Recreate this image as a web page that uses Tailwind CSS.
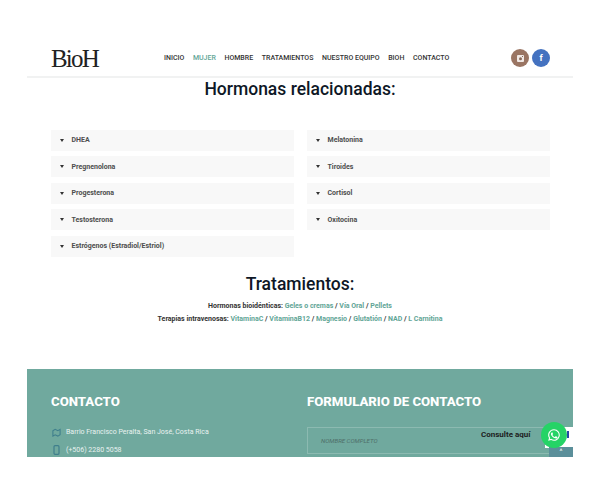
<!DOCTYPE html>
<html lang="es">
<head>
  <meta charset="UTF-8" />
  <title>BioH - Mujer</title>
  <script src="https://cdn.jsdelivr.net/npm/@tailwindcss/browser@4"></script>
</head>
<body class="bg-white w-[600px] h-[500px] overflow-hidden font-['Roboto',sans-serif]">
  <div class="relative mx-[27px] mt-[40px] w-[546px] h-[417px] overflow-hidden flex flex-col">

    <!-- Header -->
    <header class="h-[38px] shrink-0 border-b-2 border-[#f1f2f2] flex items-center pl-[24px] pr-[23px]">
      <span class="font-['Liberation_Serif',serif] text-[25px] tracking-[-1.800px] leading-none text-[#222] w-[113px]">BioH</span>
      <nav class="flex items-center gap-[8.600px] text-[7px] font-medium text-[#333] uppercase">
        <a>Inicio</a>
        <a class="text-[#5fa596]">Mujer</a>
        <a>Hombre</a>
        <a>Tratamientos</a>
        <a>Nuestro equipo</a>
        <a>BioH</a>
        <a>Contacto</a>
      </nav>
      <div class="ml-auto flex items-center gap-[3px]">
        <span class="w-[18px] h-[18px] rounded-full bg-[#9a7563] flex items-center justify-center">
          <svg width="7" height="7" viewBox="0 0 7 7"><rect width="7" height="7" rx="1" fill="#f1e9e5"/><circle cx="3.500" cy="3.700" r="1.500" fill="#8a6b5b"/><rect x="5" y="1" width="1" height="1" fill="#8a6b5b"/></svg>
        </span>
        <span class="w-[18px] h-[18px] rounded-full bg-[#4472c0] flex items-center justify-center text-white text-[9px] font-bold leading-none">f</span>
      </div>
    </header>

    <h2 class="text-center text-[17.500px] leading-[22px] font-medium text-[#0e1726]">Hormonas relacionadas:</h2>

    <!-- Acordeones -->
    <div class="grid grid-cols-2 gap-x-[13px] gap-y-[5.600px] pl-[24px] pr-[23px] mt-[29.700px] text-[7px] font-bold text-[#4d4d4d]">
      <div class="h-[21px] bg-[#f8f8f8] flex items-center pl-[9px] gap-[7.500px]"><span class="w-0 h-0 border-x-[2.500px] border-x-transparent border-t-[3px] border-t-[#333]"></span>DHEA</div>
      <div class="h-[21px] bg-[#f8f8f8] flex items-center pl-[9px] gap-[7.500px]"><span class="w-0 h-0 border-x-[2.500px] border-x-transparent border-t-[3px] border-t-[#333]"></span>Melatonina</div>
      <div class="h-[21px] bg-[#f8f8f8] flex items-center pl-[9px] gap-[7.500px]"><span class="w-0 h-0 border-x-[2.500px] border-x-transparent border-t-[3px] border-t-[#333]"></span>Pregnenolona</div>
      <div class="h-[21px] bg-[#f8f8f8] flex items-center pl-[9px] gap-[7.500px]"><span class="w-0 h-0 border-x-[2.500px] border-x-transparent border-t-[3px] border-t-[#333]"></span>Tiroides</div>
      <div class="h-[21px] bg-[#f8f8f8] flex items-center pl-[9px] gap-[7.500px]"><span class="w-0 h-0 border-x-[2.500px] border-x-transparent border-t-[3px] border-t-[#333]"></span>Progesterona</div>
      <div class="h-[21px] bg-[#f8f8f8] flex items-center pl-[9px] gap-[7.500px]"><span class="w-0 h-0 border-x-[2.500px] border-x-transparent border-t-[3px] border-t-[#333]"></span>Cortisol</div>
      <div class="h-[21px] bg-[#f8f8f8] flex items-center pl-[9px] gap-[7.500px]"><span class="w-0 h-0 border-x-[2.500px] border-x-transparent border-t-[3px] border-t-[#333]"></span>Testosterona</div>
      <div class="h-[21px] bg-[#f8f8f8] flex items-center pl-[9px] gap-[7.500px]"><span class="w-0 h-0 border-x-[2.500px] border-x-transparent border-t-[3px] border-t-[#333]"></span>Oxitocina</div>
      <div class="h-[21px] bg-[#f8f8f8] flex items-center pl-[9px] gap-[7.500px]"><span class="w-0 h-0 border-x-[2.500px] border-x-transparent border-t-[3px] border-t-[#333]"></span>Estrógenos (Estradiol/Estriol)</div>
    </div>

    <!-- Tratamientos -->
    <h2 class="text-center text-[17.500px] leading-[22px] font-medium text-[#0e1726] mt-[16px]">Tratamientos:</h2>
    <div class="text-center text-[7px] font-bold text-[#333] mt-[4.500px] leading-[13px]">
      <p>Hormonas bioidénticas: <span class="text-[#5fa596]">Geles o cremas</span> / <span class="text-[#5fa596]">Vía Oral</span> / <span class="text-[#5fa596]">Pellets</span></p>
      <p>Terapias intravenosas: <span class="text-[#5fa596]">VitaminaC</span> / <span class="text-[#5fa596]">VitaminaB12</span> / <span class="text-[#5fa596]">Magnesio</span> / <span class="text-[#5fa596]">Glutatión</span> / <span class="text-[#5fa596]">NAD</span> / <span class="text-[#5fa596]">L Carnitina</span></p>
    </div>

    <!-- Footer -->
    <footer class="absolute left-0 top-[329px] w-[546px] h-[88px] bg-[#70a99e] grid grid-cols-2 gap-x-[13px] pl-[24px] pr-[23px] pt-[24px] text-white">
      <div>
        <h3 class="text-[13.200px] leading-[18px] font-extrabold">CONTACTO</h3>
        <div class="mt-[15px] flex items-center gap-[5px] text-[7px] text-[#e8f2f0] h-[12px] pl-[1px]">
          <svg width="9" height="9" viewBox="0 0 10 10" fill="none" stroke="#3f7f8c" stroke-width="1.200"><path d="M1 3l2.500-1.500 3 1.500 2.500-1.500v6l-2.500 1.500-3-1.500-2.500 1.500z"/></svg>
          Barrio Francisco Peralta, San José, Costa Rica
        </div>
        <div class="mt-[6px] flex items-center gap-[5px] text-[7px] text-[#e8f2f0] h-[12px] pl-[1px]">
          <svg width="9" height="10" viewBox="0 0 9 10" fill="none" stroke="#3f7f8c" stroke-width="1.200"><rect x="2" y="0.700" width="5" height="8.600" rx="1"/></svg>
          (+506) 2280 5058
        </div>
      </div>
      <div>
        <h3 class="text-[13.200px] leading-[18px] font-extrabold">FORMULARIO DE CONTACTO</h3>
        <div class="mt-[16px] h-[27px] border border-white/20 flex items-center pl-[13px] text-[6.100px] italic text-[#4f6f69]">NOMBRE COMPLETO</div>
      </div>
    </footer>

    <!-- reCAPTCHA, volver arriba y WhatsApp flotantes -->
    <div class="absolute left-[518px] top-[387px] w-[28px] h-[21px] bg-white">
      <span class="absolute left-[22px] top-[4px] w-[2px] h-[7px] bg-[#2747a8]"></span>
    </div>
    <div class="absolute left-[522px] top-[407px] w-[24px] h-[10px] bg-[#5b8f9a] flex justify-center text-white text-[7px] leading-[11px]">^</div>
    <span class="absolute left-[454px] top-[389px] text-[8px] font-bold text-[#1d1d1d]">Consulte aquí</span>
    <div class="absolute left-[514px] top-[382px] w-[26px] h-[26px] rounded-full bg-[#25d366] flex items-center justify-center">
      <svg width="14" height="14" viewBox="0 0 24 24" fill="#fff"><path d="M12 2a10 10 0 0 0-8.600 15.100L2 22l5-1.300A10 10 0 1 0 12 2zm0 2a8 8 0 1 1-4.300 14.700l-.4-.2-2.500.7.700-2.400-.3-.4A8 8 0 0 1 12 4zM8.700 7.500c-.3 0-.7.100-1 .5-.4.400-1 1-1 2.300s1 2.700 1.100 2.900c.2.200 2 3 4.800 4.100 2.300.900 2.800.7 3.300.7.500-.1 1.600-.7 1.800-1.300.2-.6.2-1.200.2-1.300-.1-.1-.3-.2-.6-.4l-2-.9c-.3-.1-.5-.2-.7.100l-.9 1.100c-.2.200-.3.200-.6.100-.3-.2-1.200-.5-2.300-1.400-.8-.7-1.400-1.600-1.500-1.900-.2-.3 0-.4.100-.6l.5-.5.300-.5c.1-.2 0-.4 0-.5l-.9-2.100c-.2-.5-.5-.5-.7-.5z"/></svg>
    </div>
  </div>
</body>
</html>
